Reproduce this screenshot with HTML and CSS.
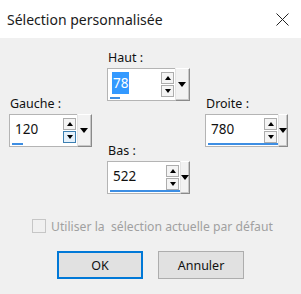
FILE: index.html
```html
<!DOCTYPE html>
<html lang="fr">
<head>
    <meta charset="UTF-8">
    <title>Sélection personnalisée</title>
    <link rel="stylesheet" href="styles.css">
</head>
<body>
    <div class="dialog">
        <div class="titlebar">
            <span class="title">Sélection personnalisée</span>
            <svg class="close" width="13" height="13" viewBox="0 0 13 13">
                <path d="M0.5 0.5 L12.5 12.5 M12.5 0.5 L0.5 12.5" stroke="#222" stroke-width="1" fill="none"/>
            </svg>
        </div>
        <div class="content">
            <div class="sides">
                <div class="field haut">
                    <label>Haut :</label>
                    <div class="spin">
                        <div class="spin-box">
                            <div class="spin-row">
                                <span class="value"><span class="selected">78</span></span>
                                <div class="arrows">
                                    <span class="arrow up"></span>
                                    <span class="arrow down"></span>
                                </div>
                            </div>
                            <div class="bar" style="width: 10px"></div>
                        </div>
                        <div class="drop"><span class="drop-tri"></span></div>
                    </div>
                </div>
                <div class="field gauche">
                    <label>Gauche :</label>
                    <div class="spin">
                        <div class="spin-box">
                            <div class="spin-row">
                                <span class="value">120</span>
                                <div class="arrows">
                                    <span class="arrow up"></span>
                                    <span class="arrow down hover"></span>
                                </div>
                            </div>
                            <div class="bar" style="width: 11px"></div>
                        </div>
                        <div class="drop"><span class="drop-tri"></span></div>
                    </div>
                </div>
                <div class="field droite">
                    <label>Droite :</label>
                    <div class="spin">
                        <div class="spin-box">
                            <div class="spin-row">
                                <span class="value">780</span>
                                <div class="arrows">
                                    <span class="arrow up"></span>
                                    <span class="arrow down"></span>
                                </div>
                            </div>
                            <div class="bar" style="width: 70px"></div>
                        </div>
                        <div class="drop"><span class="drop-tri"></span></div>
                    </div>
                </div>
                <div class="field bas">
                    <label>Bas :</label>
                    <div class="spin">
                        <div class="spin-box">
                            <div class="spin-row">
                                <span class="value">522</span>
                                <div class="arrows">
                                    <span class="arrow up"></span>
                                    <span class="arrow down"></span>
                                </div>
                            </div>
                            <div class="bar" style="width: 70px"></div>
                        </div>
                        <div class="drop"><span class="drop-tri"></span></div>
                    </div>
                </div>
            </div>
            <label class="check">
                <span class="check-box"></span>
                <span class="check-text">Utiliser la  sélection actuelle par défaut</span>
            </label>
            <div class="buttons">
                <button class="btn ok">OK</button>
                <button class="btn">Annuler</button>
            </div>
        </div>
    </div>
</body>
</html>
```

FILE: styles.css
```css
body {
    margin: 0;
    font-family: "Noto Sans", "Open Sans", sans-serif;
    color: #000;
}

.dialog {
    width: 301px; height: 294px;
    background: #f0f0f0;
    display: flex; flex-direction: column;
}

.titlebar {
    height: 38px;
    background: #fff;
    display: flex; align-items: center;
    justify-content: space-between;
    padding: 0 12px 0 7px;
}

.title {
    font-size: 14px;
    color: #1a1a1a;
}

.close {
    margin-top: 1px;
}

.content {
    padding-top: 12px;
}

.sides {
    display: grid;
    margin-left: 9px;
    grid-template-columns: 83px 83px 83px;
    column-gap: 15px;
    grid-template-rows: 46px 5px 42px 4px 47px;
    grid-template-areas:
        ".      haut   ."
        "gauche haut   droite"
        "gauche .      droite"
        "gauche bas    droite"
        ".      bas    .";
}

.haut { grid-area: haut; }
.gauche { grid-area: gauche; }
.droite { grid-area: droite; }
.bas { grid-area: bas; }

.field {
    display: flex; flex-direction: column;
}

.field label {
    font-size: 12.5px;
    line-height: 16px;
    height: 16px;
    margin: 0 0 2px 1px;
    color: #111;
}

.spin {
    display: flex;
    height: 34px;
}

.spin-box {
    flex: 1;
    background: #fff;
    border: 1px solid #b4b4b4;
    border-right: none;
    display: flex; flex-direction: column;
}

.spin-row {
    flex: 1;
    display: flex; align-items: center;
    padding-left: 5px;
}

.value {
    flex: 1;
    font-size: 13.5px;
    color: #111;
}

.selected {
    background: #3399ff;
    color: #fff;
    padding: 2px 1px;
    margin-left: -1px;
}

.arrows {
    display: flex; flex-direction: column;
    gap: 1px;
    margin: 3px 1px 0 0;
}

.arrow {
    width: 11px; height: 10px;
    border: 1px solid #adadad;
    background: #f4f4f4;
    display: flex; align-items: center; justify-content: center;
}

.arrow::after {
    content: "";
    border-left: 3.5px solid transparent;
    border-right: 3.5px solid transparent;
}

.arrow.up::after { border-bottom: 4px solid #000; }
.arrow.down::after { border-top: 4px solid #000; }

.arrow.hover {
    background: #e5f1fb;
    border-color: #3c7fb1;
}

.bar {
    height: 2px;
    background: #3d8ee3;
    margin: 0 0 1px 2px;
}

.drop {
    width: 13px;
    background: #f2f2f2;
    border-top: 1px solid #fff;
    border-left: 1px solid #e3e3e3;
    border-right: 1px solid #8a8a8a;
    border-bottom: 1px solid #8a8a8a;
    box-shadow: inset -1px -1px 0 #c8c8c8;
    display: flex; align-items: center; justify-content: center;
}

.drop-tri {
    border-left: 4px solid transparent;
    border-right: 4px solid transparent;
    border-top: 5px solid #000;
    margin-left: -1px;
}

.check {
    display: flex; align-items: center;
    margin: 25px 0 0 32px;
    height: 14px;
}

.check-box {
    width: 12px; height: 12px;
    border: 1px solid #c6c6c6;
    background: #f0f0f0;
    margin-right: 5px;
}

.check-text {
    white-space: pre;
    font-size: 12.2px;
    color: #a0a0a0;
}

.buttons {
    display: flex;
    gap: 15px;
    margin: 18px 0 0 57px;
}

.btn {
    width: 86px; height: 28px;
    background: #e1e1e1;
    border: 1px solid #adadad;
    font-family: "Noto Sans", "Open Sans", sans-serif;
    font-size: 12.5px;
    color: #111;
    padding: 0;
}

.btn.ok {
    border: 2px solid #0078d7;
}
```
